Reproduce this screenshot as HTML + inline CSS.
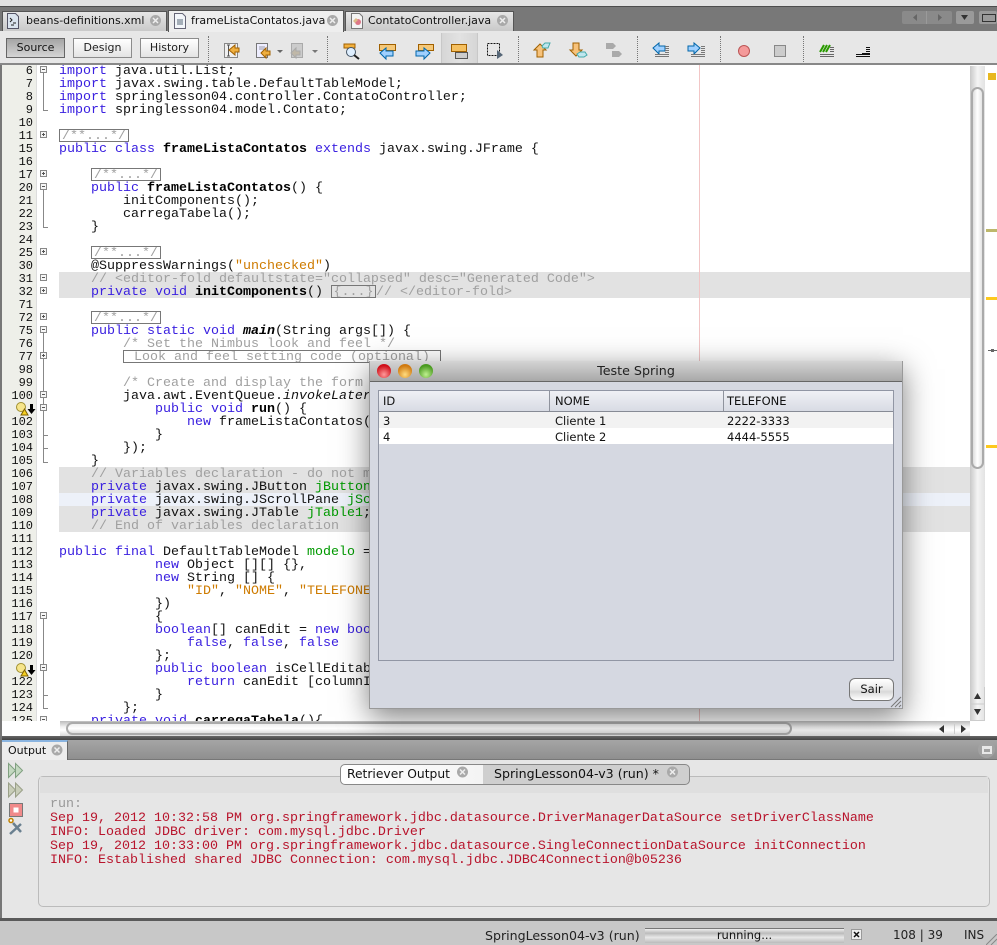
<!DOCTYPE html>
<html><head><meta charset="utf-8"><style>
html,body{margin:0;padding:0}
body{width:997px;height:945px;position:relative;overflow:hidden;background:#e6e6e6;font-family:"DejaVu Sans","Liberation Sans",sans-serif;font-size:11px;color:#111}
div,svg,pre,span.a{position:absolute}
pre{margin:0;font-family:"Liberation Mono",monospace;font-size:13.33px;line-height:13px}
.k{color:#3a20e0}.c{color:#a0a0a0}.s{color:#ce7b00}.g{color:#009a00}.b{font-weight:bold;color:#000}.i{font-style:italic}
.box{border:1px solid #777;height:11px;box-sizing:content-box;line-height:13px;text-align:center;overflow:hidden}
.tab{top:11px;height:20px;box-sizing:border-box;border:1px solid #555;border-bottom:0;background:linear-gradient(#e6e6e6,#c9c9c9);line-height:18px;font-size:11px;white-space:nowrap}
.btn{top:38px;height:20px;box-sizing:border-box;border:1px solid #8c8c8c;background:linear-gradient(#fff,#e4e4e4);text-align:center;line-height:18px;font-size:11px;color:#222}
.sep{top:36px;height:26px;width:0;border-left:1px dotted #777}
.fb{left:40px;width:5px;height:5px;border:1px solid #888;background:#f6f6f6}
.fb:after{content:"";position:absolute;left:1px;top:2px;width:3px;height:1px;background:#555}
.p:before{content:"";position:absolute;left:2px;top:1px;width:1px;height:3px;background:#555}
.fl{left:43px;width:1px;background:#888}
.ft{left:43px;width:5px;height:1px;background:#888}
.cell{line-height:14px;font-size:11.5px;white-space:nowrap}
</style></head><body>

<!-- top -->
<div style="left:0;top:0;width:997px;height:6px;background:#e2e2e2"></div>
<div style="left:0;top:6px;width:997px;height:25px;background:#787878;border-top:1px solid #4d4d4d;box-sizing:border-box"></div>
<div class="tab" style="left:2px;width:165px;padding-left:23px">beans-definitions.xml</div>
<div class="tab" style="left:168px;width:176px;top:10px;height:22px;background:#eee;padding-left:22px;z-index:2;line-height:20px">frameListaContatos.java</div>
<div class="tab" style="left:345px;width:169px;padding-left:22px">ContatoController.java</div>
<svg style="left:149px;top:14px;z-index:3" width="14" height="14"><circle cx="6.500" cy="6.500" r="5.500" fill="#a9a9a9"/><path d="M4 4l5 5M9 4l-5 5" stroke="#eee" stroke-width="1.500"/></svg>
<svg style="left:326px;top:14px;z-index:3" width="14" height="14"><circle cx="6.500" cy="6.500" r="5.500" fill="#a9a9a9"/><path d="M4 4l5 5M9 4l-5 5" stroke="#eee" stroke-width="1.500"/></svg>
<svg style="left:496px;top:14px;z-index:3" width="14" height="14"><circle cx="6.500" cy="6.500" r="5.500" fill="#a9a9a9"/><path d="M4 4l5 5M9 4l-5 5" stroke="#eee" stroke-width="1.500"/></svg>
<svg style="left:6px;top:13px" width="14" height="16"><path d="M1.500 .5h8l3 3v12h-11z" fill="#dbe4ee" stroke="#556"/><path d="M4 5l2 2-2 2 M7 10h3M5 12h3" stroke="#222" fill="none"/></svg>
<svg style="left:173px;top:13px;z-index:3" width="14" height="16"><path d="M1.500 .5h8l3 3v12h-11z" fill="#f3f6fa" stroke="#667"/><path d="M4 7h6M4 9h6M4 11h6" stroke="#567" fill="none"/></svg>
<svg style="left:350px;top:13px" width="14" height="16"><path d="M1.500 .5h8l3 3v12h-11z" fill="#f3f3f3" stroke="#777"/><circle cx="8" cy="9" r="3" fill="#d78"/><path d="M3 8l3-3 2 2-3 3z" fill="#db8"/></svg>

<div style="left:902px;top:11px;width:50px;height:13px;background:#8a8a8a;border-radius:2px"></div>
<div style="left:926px;top:11px;width:1px;height:13px;background:#9a9a9a"></div>
<svg style="left:912px;top:14px" width="30" height="8"><path d="M5 0v7L1 3.500z" fill="#666"/><path d="M26 0v7l4-3.500z" fill="#666"/></svg>
<div style="left:956px;top:11px;width:18px;height:13px;background:#9a9a9a;border-radius:2px"></div>
<svg style="left:961px;top:15px" width="8" height="6"><path d="M0 0h7L3.500 5z" fill="#333"/></svg>
<div style="left:979px;top:11px;width:18px;height:13px;background:#9a9a9a;border-radius:2px"></div>
<div style="left:982px;top:14px;width:12px;height:6px;border:1px solid #333"></div>

<!-- toolbar -->
<div style="left:0;top:31px;width:997px;height:34px;background:#e7e7e7;border-bottom:2px solid #888;box-sizing:border-box"></div>
<div class="btn" style="left:6px;width:59px;background:linear-gradient(#a5a5a5,#d5d5d5);border-color:#666;color:#111">Source</div>
<div class="btn" style="left:73px;width:59px">Design</div>
<div class="btn" style="left:140px;width:59px">History</div>
<div class="sep" style="left:208px"></div><div class="sep" style="left:327px"></div><div class="sep" style="left:518px"></div><div class="sep" style="left:637px"></div><div class="sep" style="left:720px"></div><div class="sep" style="left:803px"></div>
<div style="left:441px;top:33px;width:35px;height:30px;background:linear-gradient(90deg,#d6d6d6,#e2e2e2 50%,#d6d6d6);border-left:1px solid #c8c8c8;border-right:1px solid #c8c8c8"></div>

<svg style="left:220px;top:38px" width="680" height="24" viewBox="220 38 680 24">
<rect x="224.500" y="43.500" width="13" height="14" fill="#f0f0f0" stroke="#888"/><path d="M227 45h3M228.500 45v11M227 56h3" stroke="#555" fill="none"/><path d="M229 50l6-5v3h4v4h-4v3z" fill="#f0b040" stroke="#a06000"/>
<rect x="256.500" y="43.500" width="11" height="14" fill="#eef" stroke="#777"/><path d="M259 47h6M259 49h6" stroke="#99a"/><path d="M261 53l5-5v3h4v4h-4v3z" fill="#f0b040" stroke="#a06000"/><path d="M277 50h6l-3 3z" fill="#666"/>
<rect x="291.500" y="43.500" width="11" height="14" fill="#ccc" stroke="#aaa"/><path d="M291 53l5-5v3h4v4h-4v3z" fill="#c0b8a8" stroke="#aaa"/><path d="M312 50h6l-3 3z" fill="#777"/>
<rect x="344" y="44" width="11" height="4" fill="#f2b03e" stroke="#a06000"/><circle cx="351" cy="52" r="4.500" fill="#dfefff" stroke="#456"/><path d="M354 55l5 4" stroke="#222" stroke-width="2"/>
<rect x="379.500" y="44.500" width="16" height="6" fill="#f5c878" stroke="#a06000"/><path d="M380 53l6-5v3h7v5h-7v3z" fill="#9fd0ff" stroke="#06a"/>
<rect x="418.500" y="44.500" width="15" height="6" fill="#f5c878" stroke="#a06000"/><path d="M430 53l-6-5v3h-8v5h8v3z" fill="#9fd0ff" stroke="#06a"/>
<rect x="451.500" y="44.500" width="15" height="7" fill="#f5c060" stroke="#a06000"/><rect x="455.500" y="52.500" width="12" height="6" fill="#ccc" stroke="#555"/>
<rect x="487.500" y="43.500" width="12" height="12" fill="none" stroke="#111" stroke-dasharray="2 1"/><path d="M497 50l6 5-6 4z" fill="#567"/>
<path d="M534 50l6-6 6 6h-3v7h-6v-7z" fill="#f7c27a" stroke="#a06000"/><path d="M542 46l3-3h5l-2 5h-5z" fill="#bfe6ee" stroke="#4aa"/>
<path d="M573 43h6v7h3l-6 6-6-6h3z" fill="#f7c27a" stroke="#a06000"/><path d="M577 54l3-2h5l2 3-3 2h-5z" fill="#bfe6ee" stroke="#4aa"/>
<path d="M606 43h7l3 3-3 3h-7z" fill="#aaa"/><path d="M612 51h7l3 3-3 3h-7z" fill="#aaa"/>
<path d="M653 48l6-5v3h6v5h-6v3z" fill="#9fd0ff" stroke="#06a"/><path d="M655 54h14v1h-14zM655 56h14v1h-14zM665 46h4v1h-4zM665 48h4v1h-4zM665 50h4v1h-4zM665 52h4v1h-4z" fill="#777"/>
<path d="M700 48l-6-5v3h-6v5h6v3z" fill="#9fd0ff" stroke="#06a"/><path d="M691 54h14v1h-14zM691 56h14v1h-14zM701 46h4v1h-4zM701 48h4v1h-4zM701 50h4v1h-4zM701 52h4v1h-4z" fill="#777"/>
<circle cx="744" cy="51" r="5.500" fill="#f49a9a" stroke="#b55"/>
<rect x="774.500" y="45.500" width="11" height="11" fill="#ccc" stroke="#888"/>
<path d="M820 52l4-7M823 52l4-7M826 52l4-7" stroke="#2a9a00" stroke-width="2"/><path d="M820 54h14v1h-14zM820 56h14v1h-14zM830 47h4v1h-4zM830 49h4v1h-4zM830 51h4v1h-4z" fill="#666"/>
<path d="M856 54h14v1h-14zM856 56h14v1h-14zM866 47h4v1h-4zM866 49h4v1h-4zM866 51h4v1h-4zM862 53h8v1h-8z" fill="#111"/>
</svg>

<!-- editor -->
<div style="left:0;top:65px;width:997px;height:671px;background:#fff;overflow:hidden">
 <div style="left:0;top:0;width:2px;height:671px;background:#777"></div>
 <div style="left:2px;top:0;width:34px;height:656px;background:#eeefe9;border-right:1px solid #ddd"></div>
 <div style="left:59px;top:207px;width:911px;height:26px;background:#e2e2e2"></div>
 <div style="left:59px;top:402px;width:911px;height:65px;background:#e2e2e2"></div>
 <div style="left:59px;top:428px;width:911px;height:13px;background:#edf1f9"></div>
 <div style="left:699px;top:0;width:1px;height:656px;background:#f2c6c6"></div>
<pre style="left:2px;top:0;width:31px;text-align:right;color:#111;font-size:12px">6
7
8
9
10
11
15
16
17
20
21
22
23
24
25
30
31
32
71
72
75
76
77
98
99
100

102
103
104
105
106
107
108
109
110
111
112
113
114
115
116
117
118
119
120

122
123
124
125</pre>
<pre style="left:59px;top:0;color:#111"><span class="k">import</span> java.util.List;
<span class="k">import</span> javax.swing.table.DefaultTableModel;
<span class="k">import</span> springlesson04.controller.ContatoController;
<span class="k">import</span> springlesson04.model.Contato;


<span class="k">public class</span> <span class="b">frameListaContatos</span> <span class="k">extends</span> javax.swing.JFrame {


    <span class="k">public</span> <span class="b">frameListaContatos</span>() {
        initComponents();
        carregaTabela();
    }


    @SuppressWarnings(<span class="s">"unchecked"</span>)
    <span class="c">// &lt;editor-fold defaultstate="collapsed" desc="Generated Code"&gt;</span>
    <span class="k">private void</span> <span class="b">initComponents</span>() <span style="visibility:hidden;padding-right:5px">{...}</span><span class="c">// &lt;/editor-fold&gt;</span>


    <span class="k">public static void</span> <span class="b i">main</span>(String args[]) {
        <span class="c">/* Set the Nimbus look and feel */</span>


        <span class="c">/* Create and display the form */</span>
        java.awt.EventQueue.<span class="i">invokeLater</span>(<span class="k">new</span> Runnable() {
            <span class="k">public void</span> <span class="b">run</span>() {
                <span class="k">new</span> frameListaContatos().setVisible(<span class="k">true</span>);
            }
        });
    }
    <span class="c">// Variables declaration - do not modify</span>
    <span class="k">private</span> javax.swing.JButton <span class="g">jButton1</span>;
    <span class="k">private</span> javax.swing.JScrollPane <span class="g">jScrollPane1</span>;
    <span class="k">private</span> javax.swing.JTable <span class="g">jTable1</span>;
    <span class="c">// End of variables declaration</span>

<span class="k">public final</span> DefaultTableModel <span class="g">modelo</span> = <span class="k">new</span> DefaultTableModel(
            <span class="k">new</span> Object [][] {},
            <span class="k">new</span> String [] {
                <span class="s">"ID"</span>, <span class="s">"NOME"</span>, <span class="s">"TELEFONE"</span>
            })
            {
            <span class="k">boolean</span>[] canEdit = <span class="k">new boolean</span> [] {
                <span class="k">false</span>, <span class="k">false</span>, <span class="k">false</span>
            };
            <span class="k">public boolean</span> isCellEditable(<span class="k">int</span> rowIndex, <span class="k">int</span> columnIndex) {
                <span class="k">return</span> canEdit [columnIndex];
            }
        };
    <span class="k">private void</span> <span class="b">carregaTabela</span>(){</pre>
 <!-- folded boxes -->
 <pre class="box c" style="left:59px;top:64px;width:68px">/**...*/</pre>
 <pre class="box c" style="left:91px;top:103px;width:68px">/**...*/</pre>
 <pre class="box c" style="left:91px;top:181px;width:68px">/**...*/</pre>
 <pre class="box c" style="left:91px;top:246px;width:68px">/**...*/</pre>
 <pre class="box c" style="left:331px;top:220px;width:43px">{...}</pre>
 <pre class="box c" style="left:123px;top:285px;width:314px;text-align:left;padding-left:2px"> Look and feel setting code (optional)</pre>
 <!-- fold gutter -->
 <div class="fl" style="top:8px;height:37px"></div><div class="ft" style="top:45px"></div>
 <div class="fb" style="top:1px"></div>
 <div class="fb p" style="top:66px"></div>
 <div class="fb p" style="top:105px"></div>
 <div class="fl" style="top:125px;height:37px"></div><div class="ft" style="top:162px"></div><div class="fb" style="top:118px"></div>
 <div class="fb p" style="top:183px"></div>
 <div class="fb" style="top:209px"></div>
 <div class="fb p" style="top:222px"></div>
 <div class="fb p" style="top:248px"></div>
 <div class="fl" style="top:268px;height:129px"></div><div class="ft" style="top:397px"></div>
 <div class="ft" style="top:370px"></div><div class="ft" style="top:383px"></div>
 <div class="fb" style="top:261px"></div>
 <div class="fb p" style="top:287px"></div>
 <div class="fb" style="top:326px"></div>
 <div class="fb" style="top:339px"></div>
 <div class="fl" style="top:554px;height:89px"></div><div class="ft" style="top:643px"></div><div class="ft" style="top:630px"></div>
 <div class="fb" style="top:547px"></div>
 <div class="fb" style="top:599px"></div>
 <div class="fb" style="top:651px"></div>
 <svg style="left:15px;top:337px" width="22" height="16"><circle cx="6" cy="5" r="4.500" fill="#f6e58a" stroke="#a09030"/><path d="M6 13l3.500-6 3.500 6z" fill="#f5d020" stroke="#806000"/><path d="M15 2h3v5h2.500L16.500 12 12.500 7H15z" fill="#000"/></svg>
 <svg style="left:15px;top:598px" width="22" height="16"><circle cx="6" cy="5" r="4.500" fill="#f6e58a" stroke="#a09030"/><path d="M6 13l3.500-6 3.500 6z" fill="#f5d020" stroke="#806000"/><path d="M15 2h3v5h2.500L16.500 12 12.500 7H15z" fill="#000"/></svg>
 <!-- h scrollbar -->
 <div style="top:656px;left:2px;width:58px;height:15px;background:#fff"></div>
 <div style="left:60px;top:656px;width:910px;height:15px;background:linear-gradient(#bbb,#f2f2f2 40%,#fff 60%,#d8d8d8)"></div>
 <div style="left:66px;top:657px;width:726px;height:13px;border:2px solid #aaa;border-radius:8px;box-sizing:border-box;background:linear-gradient(#eee,#fff 50%,#ddd)"></div>
 <svg style="left:938px;top:659px" width="32" height="10"><path d="M6 1v8L1 5z" fill="#333"/><path d="M23 1v8l5-4z" fill="#333"/><path d="M16.500 0v10" stroke="#ccc"/></svg>
 <!-- v scrollbar -->
 <div style="left:970px;top:1px;width:15px;height:655px;background:linear-gradient(90deg,#c8c8c8,#f4f4f4 50%,#e2e2e2)"></div>
 <div style="left:971px;top:22px;width:13px;height:382px;border:2px solid #aaa;border-radius:8px;box-sizing:border-box;background:linear-gradient(90deg,#ddd,#fff 50%,#e4e4e4)"></div>
 <svg style="left:970px;top:622px" width="15" height="34"><path d="M.5 0v33.500h14V0M0 17h15" stroke="#ccc" fill="none"/><path d="M4 12l3.500-6 3.500 6z" fill="#333"/><path d="M4 22l3.500 6 3.500-6z" fill="#333"/></svg>
 <div style="left:988px;top:8px;width:8px;height:7px;background:#e8b820"></div>
 <div style="left:986px;top:164px;width:11px;height:3px;background:#bdb76b"></div>
 <div style="left:986px;top:232px;width:11px;height:3px;background:#fdc91e"></div>
 <div style="left:988px;top:285px;width:9px;height:1px;background:#666"></div>
 <div style="left:991px;top:284px;width:3px;height:3px;background:#666"></div>
 <div style="left:986px;top:380px;width:11px;height:3px;background:#fdc91e"></div>
</div>

<!-- dialog -->
<div style="left:369px;top:361px;width:534px;height:348px;background:#d5d8e1;box-shadow:0 8px 28px rgba(0,0,0,.5);border:1px solid #999;border-top:0;box-sizing:border-box">
 <div style="left:0;top:0;width:532px;height:21px;background:linear-gradient(#d4d4d4,#a8a8a8);border-bottom:1px solid #666;box-sizing:border-box;text-align:center;font-size:12.700px;line-height:20px;color:#222">Teste Spring</div>
 <div style="left:7px;top:3px;width:14px;height:14px;border-radius:7px;background:radial-gradient(circle at 50% 75%,#ff9a9a,#d0101a 70%)"></div>
 <div style="left:28px;top:3px;width:14px;height:14px;border-radius:7px;background:radial-gradient(circle at 50% 75%,#ffdc80,#d07a10 70%)"></div>
 <div style="left:49px;top:3px;width:14px;height:14px;border-radius:7px;background:radial-gradient(circle at 50% 75%,#c0f090,#4a9a20 70%)"></div>
 <div style="left:8px;top:29px;width:516px;height:271px;border:1px solid #9196a4;box-sizing:border-box;background:#d5d8e1"></div>
 <div style="left:9px;top:30px;width:514px;height:21px;background:linear-gradient(#f0f1f5,#d8dbe4);border-bottom:1px solid #878b95;box-sizing:border-box"></div>
 <div style="left:179px;top:30px;width:1px;height:20px;background:#8f939d"></div>
 <div style="left:353px;top:30px;width:1px;height:20px;background:#8f939d"></div>
 <div style="left:9px;top:51px;width:514px;height:16px;background:#f2f2f2"></div>
 <div style="left:9px;top:67px;width:514px;height:16px;background:#fff"></div>
 <div class="cell" style="left:13px;top:33px">ID</div>
 <div class="cell" style="left:185px;top:33px">NOME</div>
 <div class="cell" style="left:357px;top:33px">TELEFONE</div>
 <div class="cell" style="left:13px;top:53px">3</div>
 <div class="cell" style="left:185px;top:53px">Cliente 1</div>
 <div class="cell" style="left:357px;top:53px">2222-3333</div>
 <div class="cell" style="left:13px;top:69px">4</div>
 <div class="cell" style="left:185px;top:69px">Cliente 2</div>
 <div class="cell" style="left:357px;top:69px">4444-5555</div>
 <div style="left:479px;top:317px;width:45px;height:23px;border:1px solid #777;border-radius:6px;box-sizing:border-box;background:linear-gradient(#fff,#e8e8e8 50%,#d8d8d8 60%,#fff);text-align:center;line-height:21px;font-size:11.500px">Sair</div>
 <svg style="left:520px;top:335px" width="12" height="12"><path d="M1 11L11 1M5 11l6-6M9 11l2-2" stroke="#777"/></svg>
</div>

<!-- output -->
<div style="left:0;top:736px;width:997px;height:184px;background:#e6e6e6">
 <div style="left:0;top:0;width:997px;height:4px;background:linear-gradient(#666,#444)"></div>
 <div style="left:2px;top:4px;width:995px;height:20px;background:linear-gradient(#a5a5a5,#8f8f8f);border-bottom:1px solid #777;box-sizing:border-box"></div>
 <div style="left:2px;top:4px;width:66px;height:20px;background:#ededed;border-top:2px solid #8ab4e0;border-right:1px solid #666;box-sizing:border-box;padding-left:6px;line-height:17px;font-size:11px">Output</div>
 <svg style="left:50px;top:7px" width="14" height="14"><circle cx="7" cy="7" r="5.500" fill="#a9a9a9"/><path d="M4.500 4.500l5 5M9.500 4.500l-5 5" stroke="#eee" stroke-width="1.500"/></svg>
 <div style="left:978px;top:5px;width:17px;height:17px;border-radius:9px;background:#a2a2a2"></div>
 <div style="left:982px;top:10px;width:6px;height:3px;border:2px solid #e8e8e8;border-top-width:3px;box-sizing:content-box"></div>
 <svg style="left:6px;top:25px" width="20" height="76"><path d="M2.500 2.500l7 7-7 7zM9.500 2.500l7 7-7 7z" fill="#c3d8c0" stroke="#80a080"/><path d="M2.500 22l7 7-7 7zM9.500 22l7 7-7 7z" fill="#c8cdb8" stroke="#9aa088"/><rect x="3.500" y="42.500" width="13" height="13" fill="#f08a8a" stroke="#777"/><rect x="7.500" y="46.500" width="5" height="5" fill="#fff"/><circle cx="5" cy="59.500" r="2" fill="#fff" stroke="#c08000" stroke-width="1.500"/><path d="M4 73l11-10M7 62l8 9" stroke="#6a8090" stroke-width="2.500" fill="none"/></svg>
 <div style="left:38px;top:40px;width:952px;height:131px;border:1px solid #bbb;border-radius:5px;box-sizing:border-box;background:#e6e6e6"></div>
 <div style="left:40px;top:41px;width:948px;height:16px;background:#dfdfdf"></div>
 <div style="left:340px;top:28px;width:350px;height:21px;border:1px solid #888;border-radius:5px;box-sizing:border-box;background:linear-gradient(90deg,#fff 0,#f4f4f4 142px,#cfcfcf 142px,#cfcfcf)"></div>
 <div style="left:347px;top:30px;line-height:16px;font-size:12.300px;white-space:nowrap">Retriever Output</div>
 <svg style="left:456px;top:29px" width="14" height="14"><circle cx="6.500" cy="7" r="5.500" fill="#a9a9a9"/><path d="M4 4.500l5 5M9 4.500l-5 5" stroke="#eee" stroke-width="1.500"/></svg>
 <div style="left:494px;top:30px;line-height:16px;font-size:12.600px;white-space:nowrap">SpringLesson04-v3 (run) *</div>
 <svg style="left:666px;top:29px" width="14" height="14"><circle cx="6.500" cy="7" r="5.500" fill="#a9a9a9"/><path d="M4 4.500l5 5M9 4.500l-5 5" stroke="#eee" stroke-width="1.500"/></svg>
<pre style="left:50px;top:62px;line-height:14px;color:#b8142c"><span style="color:#999">run:</span>
Sep 19, 2012 10:32:58 PM org.springframework.jdbc.datasource.DriverManagerDataSource setDriverClassName
INFO: Loaded JDBC driver: com.mysql.jdbc.Driver
Sep 19, 2012 10:33:00 PM org.springframework.jdbc.datasource.SingleConnectionDataSource initConnection
INFO: Established shared JDBC Connection: com.mysql.jdbc.JDBC4Connection@b05236</pre>
</div>
<div style="left:0;top:736px;width:2px;height:184px;background:#777"></div>

<!-- status -->
<div style="left:0;top:918px;width:997px;height:27px;background:#c8c8c8;border-top:3px solid #5a5a5a;box-sizing:border-box"></div>
<div style="left:485px;top:928px;line-height:15px;font-size:12.600px;white-space:nowrap;color:#222">SpringLesson04-v3 (run)</div>
<div style="left:645px;top:928px;width:199px;height:15px;background:linear-gradient(#eee,#bbb 30%,#e8e8e8 60%,#bbb);border-top:1px solid #777;box-sizing:border-box;text-align:center;font-size:11.500px;line-height:13px;color:#111">running...</div>
<svg style="left:851px;top:929px" width="11" height="11"><rect x=".5" y=".5" width="10" height="10" fill="#eee" stroke="#999"/><path d="M3 3l5 5M8 3l-5 5" stroke="#111" stroke-width="1.500"/></svg>
<div style="left:893px;top:928px;line-height:15px;font-size:12px;white-space:nowrap;color:#222">108 | 39</div>
<div style="left:964px;top:928px;line-height:15px;font-size:12px;white-space:nowrap;color:#222">INS</div>
<svg style="left:986px;top:934px" width="11" height="11"><path d="M0 11L11 0M5 11l6-6" stroke="#888"/></svg>
</body></html>
